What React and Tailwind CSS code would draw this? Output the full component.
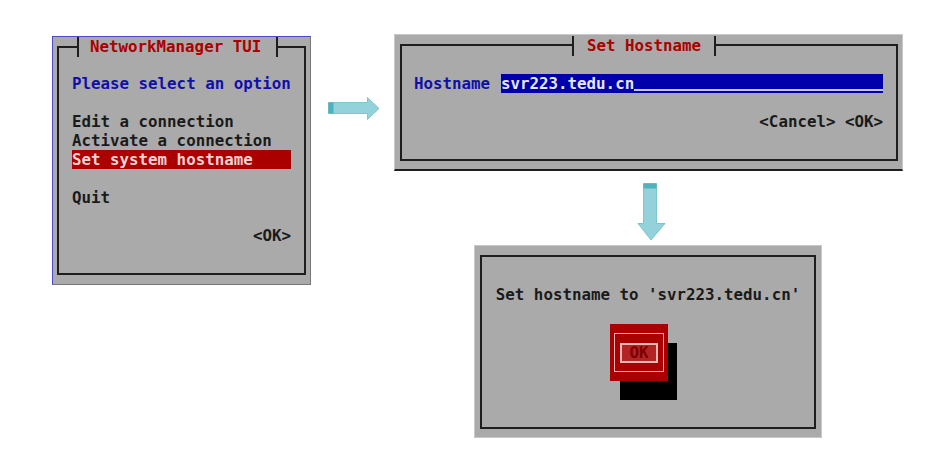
import React from "react";

const mono = { fontFamily: '"DejaVu Sans Mono", "Liberation Mono", monospace' };

function RightArrow() {
  return (
    <svg width="52" height="23" viewBox="0 0 52 23" className="block">
      <polygon points="0.5,5.5 39.5,5.5 39.5,0.5 51,11.5 39.5,22.5 39.5,16.5 0.5,16.5" fill="#93d2da" stroke="#7fc3cc" strokeWidth="1" />
      <rect x="0.5" y="5.5" width="5" height="11" fill="#4fb1bb" />
    </svg>
  );
}

function DownArrow() {
  return (
    <svg width="29" height="58" viewBox="0 0 29 58" className="block">
      <polygon points="6.5,0.5 19.5,0.5 19.5,40.5 28,40.5 14,57 1,40.5 6.5,40.5" fill="#93d2da" stroke="#7fc3cc" strokeWidth="1" />
      <rect x="6.5" y="0.5" width="13" height="5" fill="#4fb1bb" />
    </svg>
  );
}

export default function App() {
  return (
    <div className="w-[929px] h-[467px] bg-white overflow-hidden font-bold text-[15.8px] leading-[19px] text-[#1a1a1a]" style={mono}>
      <div className="flex items-start pl-[52px] pt-[34px]">
        {/* Panel 1 */}
        <div className="mt-[2px] w-[259px] h-[249px] shrink-0 bg-[#aaaaaa] border border-[#4a4ac4] border-r-[#777777] border-b-[#777777] pl-[4px] pr-[4px] pt-[9px] pb-[9px]">
          <div className="relative h-full border-2 border-[#1e1e1e] pl-[13px] pt-[26px]">
            <div className="absolute left-[18px] top-[-11px] h-[20px] leading-[20px] bg-[#aaaaaa] border-l-2 border-r-2 border-[#1e1e1e] pl-[11px] pr-[15px] text-[#aa0000] whitespace-pre">
              NetworkManager TUI
            </div>
            <div className="w-[219px] whitespace-pre">
              <div className="h-[19px] text-[#1010a8]">Please select an option</div>
              <div className="h-[19px]"></div>
              <div className="h-[19px]">Edit a connection</div>
              <div className="h-[19px]">Activate a connection</div>
              <div className="h-[19px] bg-[#aa0000] text-[#f2d2d2]">Set system hostname</div>
              <div className="h-[19px]"></div>
              <div className="h-[19px]">Quit</div>
              <div className="h-[19px]"></div>
              <div className="h-[19px] text-right">&lt;OK&gt;</div>
            </div>
          </div>
        </div>

        {/* Right arrow */}
        <div className="ml-[17px] mt-[63px] shrink-0">
          <RightArrow />
        </div>

        {/* Right column */}
        <div className="ml-[14px] w-[509px] shrink-0 flex flex-col items-start">
          {/* Panel 2 */}
          <div className="w-[509px] h-[137px] bg-[#aaaaaa] border border-[#c8c8c8] border-b-2 border-b-[#1e1e1e] pl-[5px] pr-[4px] pt-[9px] pb-[8px]">
            <div className="relative h-full border-2 border-[#1e1e1e] pl-[12px] pr-[13px] pt-[28px]">
              <div className="absolute left-[170px] top-[-10px] h-[20px] leading-[20px] bg-[#aaaaaa] border-l-2 border-r-2 border-[#1e1e1e] pl-[13px] pr-[13px] text-[#aa0000] whitespace-pre">
                Set Hostname
              </div>
              <div className="flex h-[19px] whitespace-pre">
                <span className="text-[#1010a8] w-[87px] shrink-0">Hostname</span>
                <div className="flex-1 flex bg-[#0000aa] text-[#e6e6f2]">
                  <span>svr223.tedu.cn</span>
                  <span className="flex-1 h-[17px] border-b-2 border-[#c8c8e6]"></span>
                </div>
              </div>
              <div className="h-[19px]"></div>
              <div className="h-[19px] text-right whitespace-pre">&lt;Cancel&gt; &lt;OK&gt;</div>
            </div>
          </div>

          {/* Down arrow */}
          <div className="ml-[243px] mt-[12px]">
            <DownArrow />
          </div>

          {/* Panel 3 */}
          <div className="ml-[80px] mt-[4px] w-[348px] h-[193px] bg-[#aaaaaa] border border-[#c8c8c8] pl-[5px] pr-[5px] pt-[9px] pb-[8px]">
            <div className="h-full border-2 border-[#1e1e1e] pt-[28px]">
              <div className="h-[19px] text-center whitespace-pre">Set hostname to 'svr223.tedu.cn'</div>
              <div className="relative ml-[128px] mt-[20px] w-[58px] h-[57px]">
                <div className="absolute left-[10px] top-[19px] w-[57px] h-[57px] bg-black"></div>
                <div className="relative w-[58px] h-[57px] bg-[#aa0000] pl-[4px] pr-[4px] pt-[9px] pb-[9px]">
                  <div className="h-full border border-[#e6b4b4] pl-[5px] pt-[9px]">
                    <div className="w-[38px] h-[20px] border-2 border-[#e8b8b8] bg-[#b22424] text-[#7a0000] text-[15.8px] leading-[16px] text-center">OK</div>
                  </div>
                </div>
              </div>
            </div>
          </div>
        </div>
      </div>
    </div>
  );
}
